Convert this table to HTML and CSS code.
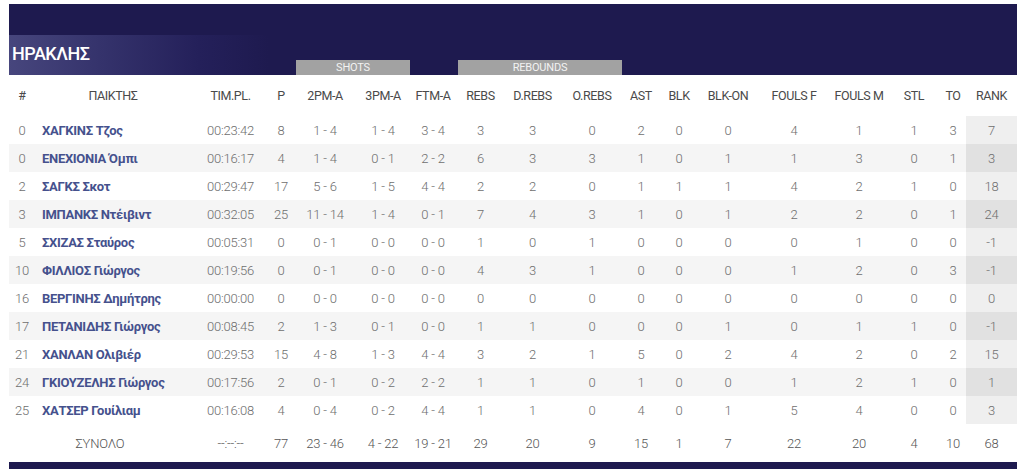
FILE: index.html
```html
<!DOCTYPE html>
<html lang="el">
<head>
<meta charset="utf-8">
<title>ΗΡΑΚΛΗΣ</title>
<link rel="stylesheet" href="styles.css">
</head>
<body>
<div class="page">
  <div class="team-head">
    <div class="head-top"></div>
    <div class="band cols">
      <h2 class="team-name">ΗΡΑΚΛΗΣ</h2>
      <div class="tab tab-shots">SHOTS</div>
      <div class="tab tab-rebs">REBOUNDS</div>
    </div>
  </div>
  <table class="stats">
    <colgroup>
      <col class="c-num"><col class="c-player"><col class="c-time"><col class="c-p">
      <col class="c-2pm"><col class="c-3pm"><col class="c-ftm"><col class="c-rebs">
      <col class="c-drebs"><col class="c-orebs"><col class="c-ast"><col class="c-blk">
      <col class="c-blkon"><col class="c-fouf"><col class="c-foum"><col class="c-stl">
      <col class="c-to"><col class="c-rank">
    </colgroup>
    <thead>
      <tr>
        <th>#</th><th>ΠΑΙΚΤΗΣ</th><th>TIM.PL.</th><th>P</th><th>2PM-A</th><th>3PM-A</th><th>FTM-A</th><th>REBS</th><th>D.REBS</th><th>O.REBS</th><th>AST</th><th>BLK</th><th>BLK-ON</th><th>FOULS F</th><th>FOULS M</th><th>STL</th><th>TO</th><th>RANK</th>
      </tr>
    </thead>
    <tbody>
      <tr><td>0</td><td class="name">ΧΑΓΚΙΝΣ Τζος</td><td>00:23:42</td><td>8</td><td>1 - 4</td><td>1 - 4</td><td>3 - 4</td><td>3</td><td>3</td><td>0</td><td>2</td><td>0</td><td>0</td><td>4</td><td>1</td><td>1</td><td>3</td><td class="rank">7</td></tr>
      <tr><td>0</td><td class="name">ΕΝΕΧΙΟΝΙΑ Όμπι</td><td>00:16:17</td><td>4</td><td>1 - 4</td><td>0 - 1</td><td>2 - 2</td><td>6</td><td>3</td><td>3</td><td>1</td><td>0</td><td>1</td><td>1</td><td>3</td><td>0</td><td>1</td><td class="rank">3</td></tr>
      <tr><td>2</td><td class="name">ΣΑΓΚΣ Σκοτ</td><td>00:29:47</td><td>17</td><td>5 - 6</td><td>1 - 5</td><td>4 - 4</td><td>2</td><td>2</td><td>0</td><td>1</td><td>1</td><td>1</td><td>4</td><td>2</td><td>1</td><td>0</td><td class="rank">18</td></tr>
      <tr><td>3</td><td class="name">ΙΜΠΑΝΚΣ Ντέιβιντ</td><td>00:32:05</td><td>25</td><td>11 - 14</td><td>1 - 4</td><td>0 - 1</td><td>7</td><td>4</td><td>3</td><td>1</td><td>0</td><td>1</td><td>2</td><td>2</td><td>0</td><td>1</td><td class="rank">24</td></tr>
      <tr><td>5</td><td class="name">ΣΧΙΖΑΣ Σταύρος</td><td>00:05:31</td><td>0</td><td>0 - 1</td><td>0 - 0</td><td>0 - 0</td><td>1</td><td>0</td><td>1</td><td>0</td><td>0</td><td>0</td><td>0</td><td>1</td><td>0</td><td>0</td><td class="rank">-1</td></tr>
      <tr><td>10</td><td class="name">ΦΙΛΛΙΟΣ Γιώργος</td><td>00:19:56</td><td>0</td><td>0 - 1</td><td>0 - 0</td><td>0 - 0</td><td>4</td><td>3</td><td>1</td><td>0</td><td>0</td><td>0</td><td>1</td><td>2</td><td>0</td><td>3</td><td class="rank">-1</td></tr>
      <tr><td>16</td><td class="name">ΒΕΡΓΙΝΗΣ Δημήτρης</td><td>00:00:00</td><td>0</td><td>0 - 0</td><td>0 - 0</td><td>0 - 0</td><td>0</td><td>0</td><td>0</td><td>0</td><td>0</td><td>0</td><td>0</td><td>0</td><td>0</td><td>0</td><td class="rank">0</td></tr>
      <tr><td>17</td><td class="name">ΠΕΤΑΝΙΔΗΣ Γιώργος</td><td>00:08:45</td><td>2</td><td>1 - 3</td><td>0 - 1</td><td>0 - 0</td><td>1</td><td>1</td><td>0</td><td>0</td><td>0</td><td>1</td><td>0</td><td>1</td><td>1</td><td>0</td><td class="rank">-1</td></tr>
      <tr><td>21</td><td class="name">ΧΑΝΛΑΝ Ολιβιέρ</td><td>00:29:53</td><td>15</td><td>4 - 8</td><td>1 - 3</td><td>4 - 4</td><td>3</td><td>2</td><td>1</td><td>5</td><td>0</td><td>2</td><td>4</td><td>2</td><td>0</td><td>2</td><td class="rank">15</td></tr>
      <tr><td>24</td><td class="name">ΓΚΙΟΥΖΕΛΗΣ Γιώργος</td><td>00:17:56</td><td>2</td><td>0 - 1</td><td>0 - 2</td><td>2 - 2</td><td>1</td><td>1</td><td>0</td><td>1</td><td>0</td><td>0</td><td>1</td><td>2</td><td>1</td><td>0</td><td class="rank">1</td></tr>
      <tr><td>25</td><td class="name">ΧΑΤΣΕΡ Γουίλιαμ</td><td>00:16:08</td><td>4</td><td>0 - 4</td><td>0 - 2</td><td>4 - 4</td><td>1</td><td>1</td><td>0</td><td>4</td><td>0</td><td>1</td><td>5</td><td>4</td><td>0</td><td>0</td><td class="rank">3</td></tr>
    </tbody>
    <tfoot>
      <tr><td colspan="2">ΣΥΝΟΛΟ</td><td>--:--:--</td><td>77</td><td>23 - 46</td><td>4 - 22</td><td>19 - 21</td><td>29</td><td>20</td><td>9</td><td>15</td><td>1</td><td>7</td><td>22</td><td>20</td><td>4</td><td>10</td><td>68</td></tr>
    </tfoot>
  </table>
  <div class="next-bar"></div>
</div>
</body>
</html>
```
FILE: styles.css
```css
html, body {
  margin: 0;
  padding: 0;
  background: #ffffff;
}

.page {
  padding: 4px 7px 0 9px;
  width: 1008px;
  font-family: "Roboto", "Liberation Sans", sans-serif;
}

.team-head {
  background: #1e1a4f;
}

.head-top {
  height: 31px;
}

.cols {
  display: grid;
  grid-template-columns: 26px 156px 79px 22px 66px 50px 50px 45px 59px 60px 38px 38px 60px 72px 58px 52px 26px 51px;
}

.band {
  height: 40px;
  background: linear-gradient(to right, #47467d 0px, #35336c 90px, #24205a 190px, #1e1a4f 260px);
}

.team-name {
  grid-column: 1 / 5;
  grid-row: 1;
  margin: 0;
  padding: 9px 0 0 3px;
  font-size: 18px;
  line-height: 20px;
  font-weight: 500;
  color: #ffffff;
  letter-spacing: -0.5px;
  align-self: start;
  white-space: nowrap;
}

.tab {
  grid-row: 1;
  align-self: end;
  height: 15px;
  line-height: 15px;
  background: #a2a2a2;
  color: #f2f2f2;
  font-size: 11px;
  text-align: center;
  letter-spacing: -0.2px;
}

.tab-shots {
  grid-column: 5 / 7;
  margin-left: 4px;
  margin-right: -2px;
}

.tab-rebs {
  grid-column: 8 / 11;
}

.stats {
  width: 1008px;
  table-layout: fixed;
  border-collapse: collapse;
  border-spacing: 0;
}

.c-num { width: 26px; }
.c-player { width: 156px; }
.c-time { width: 79px; }
.c-p { width: 22px; }
.c-2pm { width: 66px; }
.c-3pm { width: 50px; }
.c-ftm { width: 50px; }
.c-rebs { width: 45px; }
.c-drebs { width: 59px; }
.c-orebs { width: 60px; }
.c-ast { width: 38px; }
.c-blk { width: 38px; }
.c-blkon { width: 60px; }
.c-fouf { width: 72px; }
.c-foum { width: 58px; }
.c-stl { width: 52px; }
.c-to { width: 26px; }
.c-rank { width: 51px; }

.stats th {
  height: 41px;
  padding: 0;
  font-size: 12.5px;
  font-weight: 400;
  color: #4a4a4a;
  text-align: center;
  white-space: nowrap;
  letter-spacing: -0.4px;
}

.stats td {
  height: 28px;
  padding: 0;
  font-size: 13px;
  font-weight: 300;
  color: #6e6e6e;
  text-align: center;
  white-space: nowrap;
  letter-spacing: -0.2px;
}

.stats tbody tr:nth-child(even) {
  background: #f5f5f5;
}

.stats td.name {
  text-align: left;
  padding-left: 7px;
  font-weight: 700;
  color: #45518d;
  letter-spacing: -0.3px;
}

.stats td.rank {
  background: #efefef;
}

.stats tbody tr:nth-child(even) td.rank {
  background: #e1e1e1;
}

.stats tfoot td {
  height: 38px;
  color: #555555;
}

.next-bar {
  height: 20px;
  background: #1e1a4f;
}
```
